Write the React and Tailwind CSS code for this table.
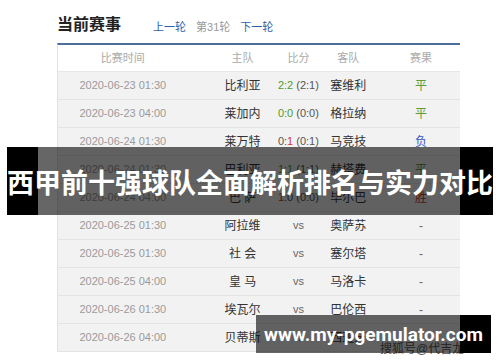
import React from 'react';

const rows = [
  { time: '2020-06-23 01:30', home: '比利亚', score: ['2', '2', '(2:1)'], tone: 'draw', away: '塞维利', res: '平' },
  { time: '2020-06-23 04:00', home: '莱加内', score: ['0', '0', '(0:0)'], tone: 'draw', away: '格拉纳', res: '平' },
  { time: '2020-06-24 01:30', home: '莱万特', score: ['0', '1', '(0:1)'], tone: 'away', away: '马竞技', res: '负' },
  { time: '2020-06-24 01:30', home: '巴利亚', score: ['1', '1', '(1:1)'], tone: 'draw', away: '赫塔费', res: '平' },
  { time: '2020-06-24 04:00', home: '巴 萨', score: ['1', '0', '(0:0)'], tone: 'home', away: '毕尔巴', res: '胜' },
  { time: '2020-06-25 01:30', home: '阿拉维', away: '奥萨苏' },
  { time: '2020-06-25 01:30', home: '社 会', away: '塞尔塔' },
  { time: '2020-06-25 04:00', home: '皇 马', away: '马洛卡' },
  { time: '2020-06-26 01:30', home: '埃瓦尔', away: '巴伦西' },
  { time: '2020-06-26 04:00', home: '贝蒂斯', away: '西班牙' },
];

const resColor = { '平': 'text-[#5a9e3c]', '负': 'text-[#3b56c4]', '胜': 'text-[#c8352c]' };

function Score({ row }) {
  if (!row.score) return <span className="text-[#666]">vs</span>;
  const [h, a, half] = row.score;
  // draw: both green, otherwise the scoring winner's digit is red
  const hc = row.tone === 'draw' ? 'text-[#4f9a2f]' : row.tone === 'home' ? 'text-[#d23a2a]' : 'text-[#555]';
  const ac = row.tone === 'draw' ? 'text-[#4f9a2f]' : row.tone === 'away' ? 'text-[#d23a2a]' : 'text-[#555]';
  return (
    <span className="text-[#555]">
      <span className={hc}>{h}</span>
      <span className={row.tone === 'draw' ? 'text-[#4f9a2f]' : ''}>:</span>
      <span className={ac}>{a}</span> {half}
    </span>
  );
}

export default function App() {
  const cjk = { fontFamily: '"Liberation Sans", "Noto Sans CJK SC", sans-serif' };
  return (
    <div className="relative w-[500px] h-[362px] bg-white overflow-hidden" style={cjk}>
      {/* header with round nav */}
      <div className="pl-[57px] pt-[15px] flex items-end h-[43px] pb-[8px]">
        <span className="text-[16px] font-bold text-[#222] leading-[20px]">当前赛事</span>
        <span className="ml-[32px] text-[11px] text-[#2f5fa8] leading-[16px]">上一轮</span>
        <span className="ml-[10px] text-[11px] text-[#999] leading-[16px]">第31轮</span>
        <span className="ml-[10px] text-[11px] text-[#2f5fa8] leading-[16px]">下一轮</span>
      </div>

      {/* match table */}
      <div className="ml-[57px] w-[403px] border-t-2 border-[#4d6e96] border-l border-l-[#e2e2e2]">
        <div className="flex items-center h-[27px] bg-white border-b border-[#e6e6e6] text-[11px] text-[#aaa]">
          <div className="w-[130px] text-center">比赛时间</div>
          <div className="ml-[25px] w-[60px] text-center">主队</div>
          <div className="w-[52px] text-center">比分</div>
          <div className="w-[48px] text-center">客队</div>
          <div className="ml-[10px] w-[78px] text-center">赛果</div>
        </div>
        {rows.map((r, i) => (
          <div key={i} className="flex items-center h-[28px] bg-[#f2f2f2] border-b border-[#e3e3e3] text-[11px]">
            <div className="w-[130px] text-center text-[#9a9a9a]">{r.time}</div>
            <div className="ml-[25px] w-[60px] text-center text-[12px] text-[#333] whitespace-pre">{r.home}</div>
            <div className="w-[52px] text-center whitespace-nowrap"><Score row={r} /></div>
            <div className="w-[48px] text-center text-[12px] text-[#333]">{r.away}</div>
            <div className={`ml-[10px] w-[78px] text-center text-[12px] ${r.res ? resColor[r.res] : 'text-[#666]'}`}>{r.res || '-'}</div>
          </div>
        ))}
      </div>

      {/* watermark */}
      <div className="absolute left-[380px] top-[342px] text-[12px] text-[#555] leading-[14px]">搜狐号@代吉龙</div>

      {/* title banner */}
      <div className="absolute left-[7px] top-[147px] w-[486px] h-[68px] flex">
        <div className="w-[31px] bg-black" />
        <div className="w-[422px] bg-black/60" />
        <div className="w-[33px] bg-black" />
        <div className="absolute inset-0 flex items-center justify-center text-white font-bold text-[27px] leading-none whitespace-nowrap" style={{ fontFamily: '"Noto Sans CJK SC", sans-serif' }}>
          西甲前十强球队全面解析排名与实力对比
        </div>
      </div>

      {/* url banner */}
      <div className="absolute left-[256px] top-[315px] w-[235px] h-[38px] flex">
        <div className="w-[204px] bg-black/60" />
        <div className="w-[31px] bg-black" />
        <div className="absolute inset-0 flex items-center justify-center text-white font-bold text-[19px] leading-none whitespace-nowrap" style={{ fontFamily: 'Roboto, sans-serif' }}>
          www.my-pgemulator.com
        </div>
      </div>
    </div>
  );
}
